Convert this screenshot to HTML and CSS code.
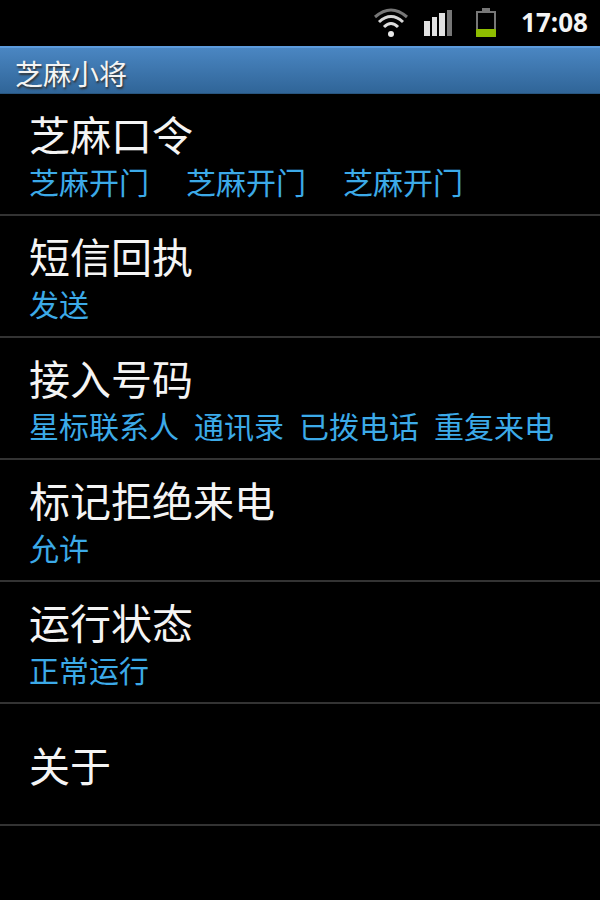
FILE: index.html
```
<!DOCTYPE html>
<html lang="zh-CN">
<head>
    <meta charset="UTF-8">
    <meta name="viewport" content="width=device-width, initial-scale=1.0">
    <title>芝麻小将</title>
    <link rel="stylesheet" href="styles.css">
</head>
<body>
    <!-- Status bar -->
    <div class="status-bar">
        <svg class="wifi" width="36" height="30" viewBox="0 0 36 30" fill="none" stroke-width="3" aria-hidden="true">
            <path d="M2 9 Q18 -5 34 9" stroke="#777"/>
            <path d="M6 14 Q18 3 30 14" stroke="#d6d6d6"/>
            <path d="M11 19 Q18 12 25 19" stroke="#dedede"/>
            <circle cx="18" cy="26" r="3" fill="#e8e8e8"/>
        </svg>
        <svg class="signal" width="30" height="28" viewBox="0 0 30 28" aria-hidden="true">
            <rect x="1" y="12" width="6" height="15" fill="#e2e2e2"/>
            <rect x="9" y="8" width="5" height="19" fill="#e2e2e2"/>
            <rect x="16" y="4" width="6" height="23" fill="#e2e2e2"/>
            <rect x="24" y="1" width="5" height="26" fill="#777"/>
        </svg>
        <svg class="battery" width="22" height="30" viewBox="0 0 22 30" aria-hidden="true">
            <rect x="7" y="0" width="8" height="4" fill="#777"/>
            <rect x="2" y="4" width="18" height="24" fill="none" stroke="#777" stroke-width="2"/>
            <rect x="1" y="21" width="20" height="8" rx="1" fill="#8fbe00"/>
        </svg>
        <span class="clock">17:08</span>
    </div>

    <h1 class="title-bar">芝麻小将</h1>

    <!-- Settings list -->
    <ul class="settings">
        <li>
            <button type="button" class="item">
                <span class="name">芝麻口令</span>
                <span class="summary wide"><span>芝麻开门</span><span>芝麻开门</span><span>芝麻开门</span></span>
            </button>
        </li>
        <li>
            <button type="button" class="item">
                <span class="name">短信回执</span>
                <span class="summary">发送</span>
            </button>
        </li>
        <li>
            <button type="button" class="item">
                <span class="name">接入号码</span>
                <span class="summary"><span>星标联系人</span><span>通讯录</span><span>已拨电话</span><span>重复来电</span></span>
            </button>
        </li>
        <li>
            <button type="button" class="item">
                <span class="name">标记拒绝来电</span>
                <span class="summary">允许</span>
            </button>
        </li>
        <li>
            <button type="button" class="item">
                <span class="name">运行状态</span>
                <span class="summary">正常运行</span>
            </button>
        </li>
        <li>
            <button type="button" class="item">
                <span class="name">关于</span>
            </button>
        </li>
    </ul>
</body>
</html>
```
FILE: styles.css
```
body {
    margin: 0;
    background-color: #000;
    color: #f4f4f4;
    font-family: "Liberation Sans", "Noto Sans CJK SC", sans-serif;
}

.status-bar {
    display: flex;
    align-items: center;
    justify-content: flex-end;
    box-sizing: border-box;
    height: 46px;
    padding-right: 12px;
}

.signal {
    margin-left: 14px;
}

.battery {
    margin-left: 22px;
}

.clock {
    margin-left: 24px;
    font-family: "Open Sans", sans-serif;
    font-size: 26px;
    font-weight: bold;
    line-height: 46px;
    padding-bottom: 2px;
}

.title-bar {
    box-sizing: border-box;
    height: 48px;
    margin: 0;
    padding: 10px 15px 0;
    border-top: 2px solid #5c9bdc;
    border-bottom: 1px solid #28557f;
    background: linear-gradient(#4a86c2, #306598);
    font-size: 28px;
    font-weight: normal;
    line-height: 36px;
    text-shadow: 1px 2px 2px #333;
}

.settings {
    margin: 0;
    padding: 0;
    list-style: none;
}

.item {
    display: flex;
    flex-direction: column;
    justify-content: center;
    box-sizing: border-box;
    width: 100%;
    min-height: 122px;
    padding: 8px 29px 0;
    border: none;
    border-bottom: 2px solid #333;
    background: none;
    color: inherit;
    font-family: inherit;
    text-align: left;
    cursor: pointer;
}

.item:active {
    background-color: #222;
}

.name {
    font-size: 41px;
    line-height: 52px;
}

.summary {
    display: flex;
    gap: 15px;
    color: #3caae8;
    font-size: 30px;
    line-height: 42px;
    white-space: nowrap;
}

.summary.wide {
    gap: 37px;
}
```
